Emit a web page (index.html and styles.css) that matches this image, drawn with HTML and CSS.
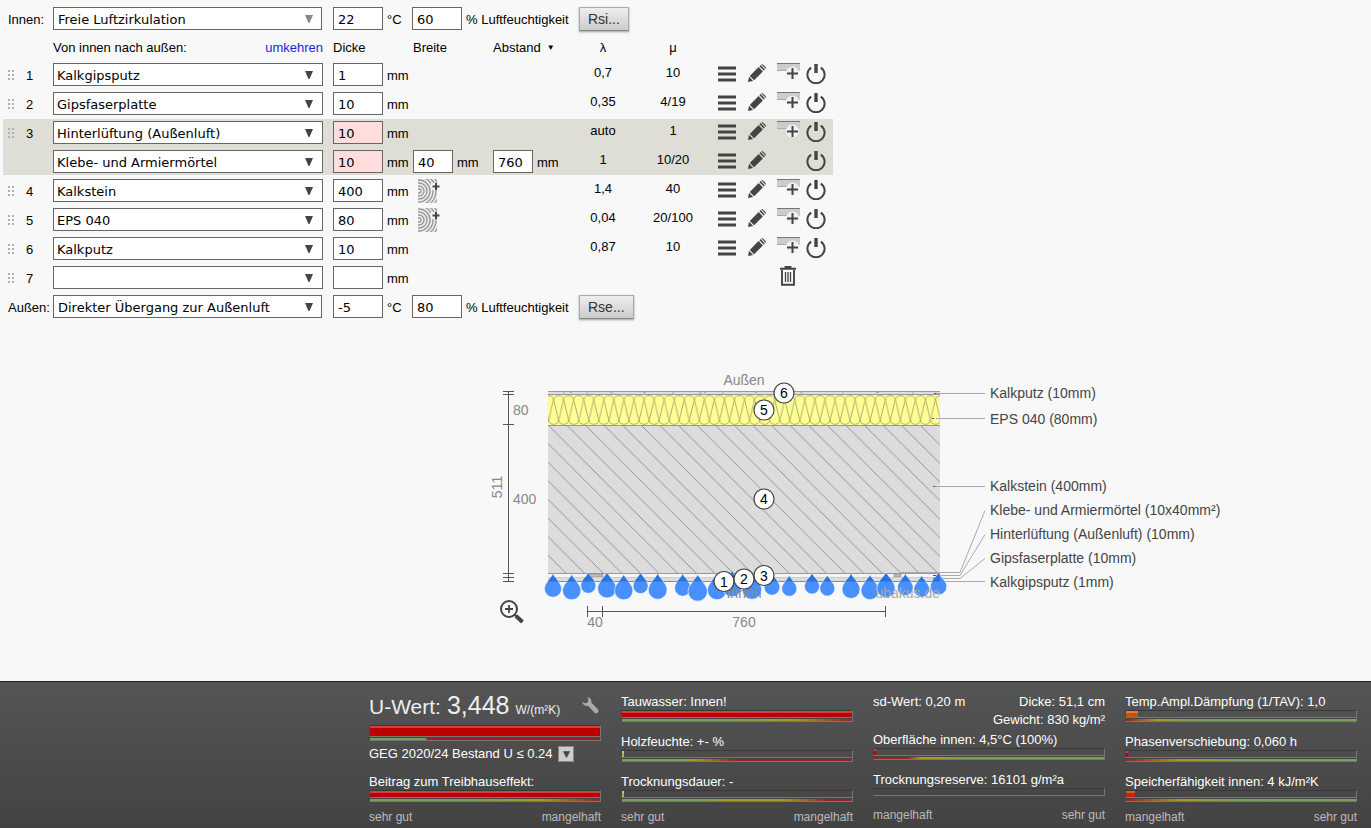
FILE: index.html
```html
<!DOCTYPE html>
<html lang="de">
<head>
<meta charset="utf-8">
<title>U-Wert-Rechner</title>
<link rel="stylesheet" href="styles.css">
</head>
<body>
<svg class="sprite" aria-hidden="true">
  <symbol id="grip" viewBox="0 0 6 10"><path d="M0 0h2v2H0zM4 0h2v2H4zM0 4h2v2H0zM4 4h2v2H4zM0 8h2v2H0zM4 8h2v2H4z" fill="#b0b0b0"/></symbol>
  <symbol id="menu" viewBox="0 0 18 16"><path d="M0 .5h18v3H0zM0 6.5h18v3H0zM0 12.5h18v3H0z" fill="#444"/></symbol>
  <symbol id="pencil" viewBox="0 0 18 18"><path d="M0 18 1 12.800 5.200 17zM1.800 11.900 10.600 3.100 14.900 7.400 6.100 16.200zM11.400 2.300 12.600 1.100 16.900 5.400 15.700 6.600zM13.300.4q.8-.7 1.600 0l2.700 2.700q.7.800 0 1.600z" fill="#444"/></symbol>
  <symbol id="addlayer" viewBox="0 0 23 20"><path d="M0 1h23v7H0z" fill="#ccc"/><path d="M0 .5h23" stroke="#777"/><path d="M0 7.500h12" stroke="#aaa"/><circle cx="15.500" cy="10" r="6.500" fill="#f2f2f2"/><path d="M15.500 5v11M10 10.500h11" stroke="#444" stroke-width="2"/></symbol>
  <symbol id="power" viewBox="0 0 20 21"><path d="M5.200 4.600a8.600 8.600 0 1 0 9.600 0" fill="none" stroke="#444" stroke-width="2"/><path d="M8.300 1h3.400v9H8.300z" fill="#444"/></symbol>
  <symbol id="trash" viewBox="0 0 16 20"><path d="M5.500 2V.8h5V2M0 2.800h16M2 4v14.800h12V4" fill="none" stroke="#444" stroke-width="1.900"/><path d="M5.500 6v10M8 6v10M10.500 6v10" stroke="#444" stroke-width="1.300"/></symbol>
  <symbol id="wood" viewBox="0 0 22 24"><path d="M0 0h19v24H0z" fill="#eee"/><svg width="19" height="24"><g fill="none" stroke="#999" stroke-width="1.400"><circle cx="1" cy="12" r="2"/><circle cx="1" cy="12" r="5"/><circle cx="1" cy="12" r="8"/><circle cx="1" cy="12" r="11"/><circle cx="1" cy="12" r="14"/><circle cx="1" cy="12" r="17"/><circle cx="1" cy="12" r="20"/></g></svg><path d="M13 4h9v7h-9z" fill="#f4f4f4"/><path d="M18 4v7M14.500 7.500h7" stroke="#444" stroke-width="2"/></symbol>
</svg>

<main class="editor">
  <div class="surface">
    <label class="surface-name" for="in-type">Innen:</label>
    <select class="pick pick-surface pick-soft" id="in-type"><option>Freie Luftzirkulation</option></select>
    <input class="num" id="in-temp" value="22"><label class="unit unit-temp" for="in-temp">°C</label>
    <input class="num" id="in-hum" value="60"><label class="unit unit-hum" for="in-hum">% Luftfeuchtigkeit</label>
    <button class="btn" type="button">Rsi...</button>
  </div>

  <table class="layers">
    <colgroup><col class="c-grip"><col class="c-no"><col class="c-mat"><col class="c-dim"><col class="c-dim"><col class="c-dim"><col class="c-lam"><col class="c-mu"><col class="c-act"></colgroup>
    <thead>
      <tr><th></th><th></th><th><div class="mat-head"><span>Von innen nach außen:</span><a href="#umkehren">umkehren</a></div></th><th>Dicke</th><th>Breite</th><th><button class="sort" type="button">Abstand <span class="tri">▼</span></button></th><th class="mid">λ</th><th class="mid">μ</th><th></th></tr>
    </thead>
    <tbody>
      <tr><td><svg class="grip"><use href="#grip"/></svg></td><td>1</td>
        <td><select class="pick" aria-label="Material 1"><option>Kalkgipsputz</option></select></td>
        <td><label class="dim"><input class="num" value="1">mm</label></td><td></td><td></td><td class="val">0,7</td><td class="val">10</td>
        <td><div class="acts"><button type="button" aria-label="Menü"><svg class="i-menu"><use href="#menu"/></svg></button><button type="button" aria-label="Bearbeiten"><svg class="i-pen"><use href="#pencil"/></svg></button><button type="button" aria-label="Einfügen"><svg class="i-add"><use href="#addlayer"/></svg></button><button type="button" aria-label="Abschalten"><svg class="i-pow"><use href="#power"/></svg></button></div></td></tr>
      <tr><td><svg class="grip"><use href="#grip"/></svg></td><td>2</td>
        <td><select class="pick" aria-label="Material 2"><option>Gipsfaserplatte</option></select></td>
        <td><label class="dim"><input class="num" value="10">mm</label></td><td></td><td></td><td class="val">0,35</td><td class="val">4/19</td>
        <td><div class="acts"><button type="button" aria-label="Menü"><svg class="i-menu"><use href="#menu"/></svg></button><button type="button" aria-label="Bearbeiten"><svg class="i-pen"><use href="#pencil"/></svg></button><button type="button" aria-label="Einfügen"><svg class="i-add"><use href="#addlayer"/></svg></button><button type="button" aria-label="Abschalten"><svg class="i-pow"><use href="#power"/></svg></button></div></td></tr>
      <tr class="shade"><td><svg class="grip"><use href="#grip"/></svg></td><td>3</td>
        <td><select class="pick" aria-label="Material 3"><option>Hinterlüftung (Außenluft)</option></select></td>
        <td><label class="dim"><input class="num warn" value="10">mm</label></td><td></td><td></td><td class="val">auto</td><td class="val">1</td>
        <td><div class="acts"><button type="button" aria-label="Menü"><svg class="i-menu"><use href="#menu"/></svg></button><button type="button" aria-label="Bearbeiten"><svg class="i-pen"><use href="#pencil"/></svg></button><button type="button" aria-label="Einfügen"><svg class="i-add"><use href="#addlayer"/></svg></button><button type="button" aria-label="Abschalten"><svg class="i-pow"><use href="#power"/></svg></button></div></td></tr>
      <tr class="shade shade-end"><td></td><td></td>
        <td><select class="pick" aria-label="Material 3, Riegel"><option>Klebe- und Armiermörtel</option></select></td>
        <td><label class="dim"><input class="num warn" value="10">mm</label></td>
        <td><label class="dim"><input class="num num-s" value="40">mm</label></td>
        <td><label class="dim"><input class="num num-s" value="760">mm</label></td><td class="val">1</td><td class="val">10/20</td>
        <td><div class="acts"><button type="button" aria-label="Menü"><svg class="i-menu"><use href="#menu"/></svg></button><button type="button" aria-label="Bearbeiten"><svg class="i-pen"><use href="#pencil"/></svg></button><span></span><button type="button" aria-label="Abschalten"><svg class="i-pow"><use href="#power"/></svg></button></div></td></tr>
      <tr><td><svg class="grip"><use href="#grip"/></svg></td><td>4</td>
        <td><select class="pick" aria-label="Material 4"><option>Kalkstein</option></select></td>
        <td><label class="dim"><input class="num" value="400">mm</label></td><td><button class="woodbtn" type="button" aria-label="Balken einfügen"><svg class="i-wood"><use href="#wood"/></svg></button></td><td></td><td class="val">1,4</td><td class="val">40</td>
        <td><div class="acts"><button type="button" aria-label="Menü"><svg class="i-menu"><use href="#menu"/></svg></button><button type="button" aria-label="Bearbeiten"><svg class="i-pen"><use href="#pencil"/></svg></button><button type="button" aria-label="Einfügen"><svg class="i-add"><use href="#addlayer"/></svg></button><button type="button" aria-label="Abschalten"><svg class="i-pow"><use href="#power"/></svg></button></div></td></tr>
      <tr><td><svg class="grip"><use href="#grip"/></svg></td><td>5</td>
        <td><select class="pick" aria-label="Material 5"><option>EPS 040</option></select></td>
        <td><label class="dim"><input class="num" value="80">mm</label></td><td><button class="woodbtn" type="button" aria-label="Balken einfügen"><svg class="i-wood"><use href="#wood"/></svg></button></td><td></td><td class="val">0,04</td><td class="val">20/100</td>
        <td><div class="acts"><button type="button" aria-label="Menü"><svg class="i-menu"><use href="#menu"/></svg></button><button type="button" aria-label="Bearbeiten"><svg class="i-pen"><use href="#pencil"/></svg></button><button type="button" aria-label="Einfügen"><svg class="i-add"><use href="#addlayer"/></svg></button><button type="button" aria-label="Abschalten"><svg class="i-pow"><use href="#power"/></svg></button></div></td></tr>
      <tr><td><svg class="grip"><use href="#grip"/></svg></td><td>6</td>
        <td><select class="pick" aria-label="Material 6"><option>Kalkputz</option></select></td>
        <td><label class="dim"><input class="num" value="10">mm</label></td><td></td><td></td><td class="val">0,87</td><td class="val">10</td>
        <td><div class="acts"><button type="button" aria-label="Menü"><svg class="i-menu"><use href="#menu"/></svg></button><button type="button" aria-label="Bearbeiten"><svg class="i-pen"><use href="#pencil"/></svg></button><button type="button" aria-label="Einfügen"><svg class="i-add"><use href="#addlayer"/></svg></button><button type="button" aria-label="Abschalten"><svg class="i-pow"><use href="#power"/></svg></button></div></td></tr>
      <tr><td><svg class="grip"><use href="#grip"/></svg></td><td>7</td>
        <td><select class="pick" aria-label="Material 7"><option></option></select></td>
        <td><label class="dim"><input class="num" value="">mm</label></td><td></td><td></td><td></td><td></td>
        <td><div class="acts"><span></span><span></span><button type="button" aria-label="Löschen"><svg class="i-trash"><use href="#trash"/></svg></button><span></span></div></td></tr>
    </tbody>
  </table>

  <div class="surface surface-out">
    <label class="surface-name" for="out-type">Außen:</label>
    <select class="pick pick-surface" id="out-type"><option>Direkter Übergang zur Außenluft</option></select>
    <input class="num" id="out-temp" value="-5"><label class="unit unit-temp" for="out-temp">°C</label>
    <input class="num" id="out-hum" value="80"><label class="unit unit-hum" for="out-hum">% Luftfeuchtigkeit</label>
    <button class="btn" type="button">Rse...</button>
  </div>
</main>

<figure class="section">
<svg class="drawing" viewBox="480 360 771 280" role="img" aria-label="Querschnitt des Bauteils">
  <defs>
    <pattern id="batt" patternUnits="userSpaceOnUse" x="548.600" y="395" width="10.050" height="30">
      <path d="M-4.500 6.500C-5.500 3-3.500.7 0 .7S5.500 3 4.500 6.500L.5 23.500C-.5 27 1.500 29.300 5 29.300S10.500 27 9.500 23.500L5.500 6.500C4.500 3 6.500.7 10 .7S15.500 3 14.500 6.500L10.500 23.500C9.500 27 11.500 29.300 15 29.300M-4.500 6.500-.5 23.500C.5 27-1.500 29.300-5 29.300" fill="none" stroke="#a3a36c" stroke-width=".9"/>
    </pattern>
    <pattern id="hatch" patternUnits="userSpaceOnUse" x="548" y="425" width="18.600" height="18.600">
      <path d="M-1-1 19.600 19.600M17.600-1 19.600 1M-1 17.600 1 19.600" stroke="#8c8c8c" stroke-width=".9"/>
    </pattern>
    <path id="drop" d="M0 0C2 4.500 8.500 8.500 8.500 14.500A8.500 8.500 0 0 1-8.500 14.500C-8.500 8.500-2 4.500 0 0Z"/>
    <clipPath id="inwall"><path d="M548 560h392v21.500H548z"/></clipPath>
    <g id="drops">
      <use href="#drop" transform="translate(553 574.300)"/><use href="#drop" transform="translate(571.700 575) scale(1.080)"/><use href="#drop" transform="translate(588.300 573) scale(.88)"/><use href="#drop" transform="translate(607 572.700) scale(1.100)"/><use href="#drop" transform="translate(623.700 575) scale(1.080)"/><use href="#drop" transform="translate(640.600 573.300) scale(.88)"/><use href="#drop" transform="translate(657.700 574) scale(1.100)"/><use href="#drop" transform="translate(682.700 574.300) scale(.95)"/><use href="#drop" transform="translate(697.700 575) scale(1.140)"/><use href="#drop" transform="translate(717 574) scale(1.120)"/><use href="#drop" transform="translate(732 571) scale(1.120)"/><use href="#drop" transform="translate(752 573) scale(1.140)"/><use href="#drop" transform="translate(772 574) scale(.92)"/><use href="#drop" transform="translate(789.300 576) scale(.88)"/><use href="#drop" transform="translate(812 573.700) scale(.88)"/><use href="#drop" transform="translate(827.300 575.700) scale(.88)"/><use href="#drop" transform="translate(851 574) scale(1.060)"/><use href="#drop" transform="translate(870 575.300) scale(1.060)"/><use href="#drop" transform="translate(886 572.700) scale(1.080)"/><use href="#drop" transform="translate(905.300 574.300) scale(.92)"/><use href="#drop" transform="translate(921.700 576) scale(.92)"/><use href="#drop" transform="translate(938.600 572.700) scale(.96)"/>
    </g>
  </defs>

  <path d="M548 391h392v4H548z" fill="#dedede"/>
  <path d="M548 391.500h392M548 394.500h392" stroke="#999"/>
  <path d="M563 393h2M570 392.500h2M586 393h2M610 393h3M643 392.500h3M672 393h2M699 393h3M704 392.500h2M722 393h2M755 392.500h2M800 393h3M842 393h2M876 392.500h3M912 393h2" stroke="#aaa"/>
  <path d="M548 395h392v30H548z" fill="#ffff94"/>
  <path d="M548 395h392v30H548z" fill="url(#batt)"/>
  <path d="M548 425h392v148H548z" fill="#dcdcdc"/>
  <path d="M548 425h392v148H548z" fill="url(#hatch)"/>
  <path d="M548 425.500h392M548 573.500h392" stroke="#999"/>
  <path d="M548 574h392v3H548z" fill="#f4f4fa"/>
  <path d="M548 577h392v5H548z" fill="#ddd"/>
  <path d="M588 574h15v3h-15zM894 574h7v3h-7z" fill="#bbb" stroke="#888" stroke-width=".6"/>
  <path d="M548 577.500h392" stroke="#ccc"/><path d="M548 581.500h392" stroke="#888"/>

  <g fill="none" stroke="#aaa">
    <path d="M936 393.500h49M936 418.500h49M934 486.500h51M895 575l6-2.500h59l25-62M936 575.500h24l25-41M936 578.500h24l25-20M936 581.500h49"/>
  </g>
  <path d="M934 393h2v1h-2zM932 418h2v1h-2zM933 486h2v1h-2zM933 575h3v1h-3zM933 578h3v1h-3z" fill="#555"/>

  <g stroke="#f8f8f8" stroke-width=".6" fill="#488fff"><use href="#drops"/></g>
  <g fill="#2c74dc" clip-path="url(#inwall)"><use href="#drops"/></g>

  <g class="tag-soft">
    <text x="744" y="385" text-anchor="middle">Außen</text>
    <text x="744" y="598" text-anchor="middle">Innen</text>
    <text x="513" y="415">80</text><text x="513" y="504">400</text>
    <text x="595" y="627" text-anchor="middle">40</text><text x="744" y="627" text-anchor="middle">760</text>
    <text transform="translate(502 487) rotate(-90)" text-anchor="middle">511</text>
  </g>
  <text class="tag-mark" x="940" y="598" text-anchor="end">ubakus.de</text>

  <path d="M508.500 391v191M503 391.500h11M503 394.500h11M503 424.500h11M503 573.500h11M503 577.500h11M503 581.500h11M587.500 611.500h298M587.500 606v11M602.500 606v11M885.500 606v11" fill="none" stroke="#555"/>

  <g fill="#fff" stroke="#444" stroke-width="1.200">
    <circle cx="784" cy="393" r="10"/><circle cx="764" cy="410" r="10"/><circle cx="764" cy="499" r="10"/><circle cx="724" cy="581.500" r="10"/><circle cx="744" cy="579" r="10"/><circle cx="764" cy="575.500" r="10"/>
  </g>
  <g class="tag-no">
    <text x="784" y="398">6</text><text x="764" y="415">5</text><text x="764" y="504">4</text><text x="724" y="587">1</text><text x="744" y="584">2</text><text x="764" y="581">3</text>
  </g>
  <g class="tag">
    <text x="990" y="398">Kalkputz (10mm)</text><text x="990" y="424">EPS 040 (80mm)</text><text x="990" y="491">Kalkstein (400mm)</text><text x="990" y="515">Klebe- und Armiermörtel (10x40mm²)</text><text x="990" y="539">Hinterlüftung (Außenluft) (10mm)</text><text x="990" y="563">Gipsfaserplatte (10mm)</text><text x="990" y="587">Kalkgipsputz (1mm)</text>
  </g>
  <g fill="none" stroke="#444"><circle cx="509" cy="609" r="8" stroke-width="2"/><path d="M509 605v8M505 609h8" stroke-width="1.800"/><path d="M514.800 614.800 517 617" stroke-width="2"/><path d="M516 616l6.500 6" stroke-width="4"/></g>
</svg>
</figure>

<footer class="results">
  <section class="col">
    <div class="uval"><span class="u-name">U-Wert:</span> <span class="u-num">3,448</span> <span class="u-unit">W/(m²K)</span>
      <svg class="wrench" viewBox="0 0 17 17"><path d="M5.500 0Q9.800.8 9.300 5.600L16.300 12.700Q17 14 15.900 15.400 14.500 16.800 12.800 15.900L6.200 8.900Q1.500 9.400 0 5L3.300 6.200 5.900 5.300 6.500 2.600Z" fill="#aaa"/></svg></div>
    <div class="bar bar-big"><i class="fill red" style="width:100%"></i></div><div class="scale s-uw"></div>
    <div class="geg"><label for="geg">GEG 2020/24 Bestand U ≤ 0.24</label><button id="geg" class="expand" type="button" aria-label="Anforderung wählen">▼</button></div>
    <div class="metric"><div class="line">Beitrag zum Treibhauseffekt:</div><div class="bar"><i class="fill red" style="width:100%"></i></div><div class="scale s-late"></div></div>
    <div class="ends"><span>sehr gut</span><span>mangelhaft</span></div>
  </section>
  <section class="col">
    <div class="metric"><div class="line">Tauwasser: Innen!</div><div class="bar"><i class="fill red" style="width:100%"></i></div><div class="scale s-late"></div></div>
    <div class="metric"><div class="line">Holzfeuchte: +- %</div><div class="bar"><i class="fill green" style="width:1%"></i></div><div class="scale s-early"></div></div>
    <div class="metric"><div class="line">Trocknungsdauer: -</div><div class="bar"><i class="fill green" style="width:1%"></i></div><div class="scale s-mid"></div></div>
    <div class="ends"><span>sehr gut</span><span>mangelhaft</span></div>
  </section>
  <section class="col">
    <div class="line pair"><span>sd-Wert: 0,20 m</span><span>Dicke: 51,1 cm</span></div>
    <div class="line right">Gewicht: 830 kg/m²</div>
    <div class="metric metric-tight"><div class="line">Oberfläche innen: 4,5°C (100%)</div><div class="bar"><i class="fill red" style="width:1%"></i></div><div class="scale s-surf"></div></div>
    <div class="metric"><div class="line">Trocknungsreserve: 16101 g/m²a</div><div class="bar"></div><div class="scale s-none"></div></div>
    <div class="ends"><span>mangelhaft</span><span>sehr gut</span></div>
  </section>
  <section class="col">
    <div class="metric"><div class="line">Temp.Ampl.Dämpfung (1/TAV): 1,0</div><div class="bar"><i class="fill orange" style="width:5%"></i></div><div class="scale s-tav"></div></div>
    <div class="metric"><div class="line">Phasenverschiebung: 0,060 h</div><div class="bar"><i class="fill red" style="width:1%"></i></div><div class="scale s-phase"></div></div>
    <div class="metric"><div class="line">Speicherfähigkeit innen: 4 kJ/m²K</div><div class="bar"><i class="fill rust" style="width:4%"></i></div><div class="scale s-phase"></div></div>
    <div class="ends"><span>mangelhaft</span><span>sehr gut</span></div>
  </section>
</footer>
</body>
</html>
```

FILE: styles.css
```css
* { box-sizing: border-box; }
body {
  margin: 0;
  min-height: 100vh;
  display: flex;
  flex-direction: column;
  background: #f8f8f8;
  color: #000;
  font: 13px/18px "Liberation Sans", Arial, sans-serif;
}
.sprite { position: absolute; width: 0; height: 0; }
svg { display: block; }
button { font: inherit; color: inherit; padding: 0; border: 0; background: none; }

/* layer editor */
.editor { padding: 7px 3px 0; }
.surface { display: flex; align-items: flex-start; }
.surface-out { margin-top: 2px; }
.surface-name { width: 50px; padding: 4px 0 0 5px; white-space: nowrap; }
.pick, .num {
  height: 23px;
  border: 1px solid #666;
  border-radius: 0;
  background-color: #fff;
  color: #000;
  font: 13px "DejaVu Sans", Verdana, sans-serif;
}
.pick {
  display: block;
  width: 270px;
  padding: 1px 24px 0 3px;
  appearance: none;
  background-image: url("data:image/svg+xml,%3Csvg xmlns='http://www.w3.org/2000/svg' width='8' height='8'%3E%3Cpath d='M0 0h8L4.500 8h-1z' fill='%23444'/%3E%3C/svg%3E");
  background-repeat: no-repeat;
  background-position: right 9px top 7px;
}
.pick-surface { width: 269px; margin-right: 11px; padding-left: 4px; background-position: right 8px top 7px; }
.pick-soft { background-image: url("data:image/svg+xml,%3Csvg xmlns='http://www.w3.org/2000/svg' width='8' height='8'%3E%3Cpath d='M0 0h8L4.500 8h-1z' fill='%23888'/%3E%3C/svg%3E"); }
.num { width: 50px; padding: 2px 4px 0; }
.num-s { width: 40px; }
.warn { background-color: #fdd; }
.unit { padding: 4px 0 0 4px; white-space: nowrap; }
.unit-temp { width: 29px; }
.unit-hum { width: 117px; }
.btn {
  height: 24px;
  padding: 0 8px;
  border: 1px solid #aaa;
  border-bottom-color: #888;
  background: linear-gradient(#eee, #ccc);
  box-shadow: 0 1px 2px #999;
  color: #333;
  font-size: 14px;
}

.layers { table-layout: fixed; width: 830px; border-collapse: collapse; }
.c-grip { width: 18px; }
.c-no { width: 32px; }
.c-mat { width: 280px; }
.c-dim { width: 80px; }
.c-lam { width: 60px; }
.c-mu { width: 80px; }
.c-act { width: 120px; }
.layers th { height: 30px; padding: 4px 0 0; font-weight: normal; text-align: left; vertical-align: middle; }
.layers th.mid { text-align: center; }
.mat-head { display: flex; justify-content: space-between; width: 270px; }
.mat-head a { color: #22d; text-decoration: none; }
.sort { display: flex; align-items: center; gap: 6px; }
.tri { font-size: 8px; line-height: 8px; }
.layers td { height: 29px; padding: 2px 0 0; vertical-align: top; }
.layers td:nth-child(2) { padding: 6px 0 0 5px; }
.layers td.val { padding-top: 3px; text-align: center; }
.shade { background: #deded6; }
.shade-end { background: linear-gradient(#deded6, #deded6) no-repeat 0 0 / 100% 27px; }
.grip { width: 6px; height: 10px; margin: 7px 0 0 5px; }
.dim { display: flex; align-items: flex-start; gap: 4px; line-height: 26px; height: 23px; }
.woodbtn { display: block; margin-left: 5px; }
.i-wood { width: 22px; height: 24px; }
.acts { display: grid; grid-template-columns: 30px 29px 29px 20px; padding-left: 5px; height: 25px; }
.acts button { display: flex; align-items: flex-start; }
.i-menu { width: 18px; height: 16px; margin-top: 3px; }
.i-pen { width: 18px; height: 18px; margin-top: 1px; }
.i-add { width: 23px; height: 20px; }
.i-pow { width: 20px; height: 21px; }
.i-trash { width: 16px; height: 20px; margin-left: 3px; }

/* cross-section */
.section { display: flex; justify-content: flex-end; margin: 41px 120px 0 0; }
.drawing { width: 771px; height: 280px; flex: none; font: 14px "Liberation Sans", Arial, sans-serif; }
.tag { fill: #444; }
.tag-soft { fill: #888; }
.tag-mark { fill: #aaa; }
.tag-no { fill: #000; text-anchor: middle; }

/* result panel */
.results {
  display: flex;
  justify-content: flex-end;
  gap: 20px;
  margin-top: auto;
  padding: 10px 14px 2px;
  border-top: 1px solid #222;
  background: linear-gradient(#555, #434343);
  color: #fff;
}
.col { width: 232px; white-space: nowrap; }
.line { height: 18px; line-height: 20px; }
.pair { display: flex; justify-content: space-between; }
.right { text-align: right; }
.metric { margin-bottom: 10px; }
.metric-tight { padding-top: 2px; }
.bar { height: 8px; border: 1px solid #777; border-top-color: #3a3a3a; border-left-color: #444; }
.bar-big { height: 12px; }
.fill { display: block; height: 100%; border-top: 2px solid; }
.red { background: #c00000; border-color: #cc4343; }
.green { background: #8bc35a; border-color: #a8d37f; }
.orange { background: #cc5200; border-color: #dc8048; }
.rust { background: #c62400; border-color: #d65a40; }
.scale { height: 4px; border: 1px solid #777; border-top-color: #444; border-left-color: #444; }
.s-uw { background: linear-gradient(90deg, #79a055 24%, #9a2222 25%); }
.s-late { background: linear-gradient(90deg, #79a055 45%, #a89a20 75%, #9a2222 100%); }
.s-early { background: linear-gradient(90deg, #79a055 25%, #a89a20 31%, #9a2222 50%); }
.s-mid { background: linear-gradient(90deg, #79a055 35%, #a89a20 45%, #a89a20 70%, #9a2222 90%); }
.s-surf { background: linear-gradient(90deg, #9a2222 15%, #a89a20 20%, #a89a20 29%, #79a055 36%); }
.s-tav { background: linear-gradient(90deg, #9a2222 0%, #a89a20 14%, #79a055 30%); }
.s-phase { background: linear-gradient(90deg, #9a2222 0%, #a89a20 24%, #79a055 48%); }
.s-none { border-color: transparent; }
.ends { display: flex; justify-content: space-between; margin-top: -4px; color: #bbb; font-size: 12px; }
.uval { display: flex; align-items: baseline; height: 33px; line-height: 26px; color: #eee; }
.u-name { font-size: 21px; }
.u-num { margin-left: 6px; font-size: 25px; }
.u-unit { margin-left: 6px; font-size: 12px; }
.wrench { width: 17px; height: 17px; margin-left: auto; align-self: flex-start; margin-top: 5px; margin-right: 2px; }
.geg { display: flex; align-items: center; gap: 6px; height: 31px; padding-bottom: 6px; }
.expand { width: 16px; height: 16px; border: 1px solid #888; background: #ccc; color: #444; font-size: 12px; line-height: 14px; }
```
